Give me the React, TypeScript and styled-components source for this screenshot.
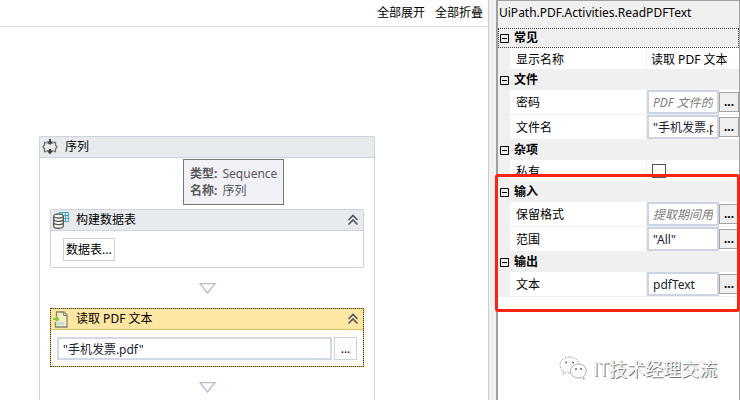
import React from "react";
import styled, { createGlobalStyle, css } from "styled-components";

const GlobalStyle = createGlobalStyle`
  * { box-sizing: border-box; }
  html, body { margin: 0; }
  body, button, input {
    font-family: "Noto Sans", "Noto Sans CJK SC", sans-serif;
    font-size: 12px;
    line-height: 16px;
    color: #000;
  }
`;

const Window = styled.div`
  display: flex;
  height: 100vh;
  overflow: hidden;
  background: #fff;
`;

const Designer = styled.main`
  flex: 1;
  min-width: 0;
  display: flex;
  flex-direction: column;
`;

const Toolbar = styled.nav`
  display: flex;
  justify-content: flex-end;
  gap: 10px;
  height: 27px;
  padding: 4px 5px 0 0;
  border-bottom: 1px solid #d9dcea;
  flex-shrink: 0;
`;

const ToolbarButton = styled.button`
  height: 18px;
  padding: 0;
  border: 0;
  background: none;
`;

const Canvas = styled.div`
  flex: 1;
  min-height: 0;
  display: flex;
  padding: 109px 113px 0 39px;
`;

const Sequence = styled.section`
  position: relative;
  flex: 1;
  min-width: 0;
  border: 1px solid #ccd3df;
  border-bottom: 0;
  border-radius: 2px 2px 0 0;
`;

const Header = styled.header<{ $selected?: boolean }>`
  display: flex;
  align-items: center;
  height: 21px;
  padding: 0 4px 0 2px;
  background: ${(p) => (p.$selected ? "#ffe6a2" : "#e7ebee")};
  border-bottom: 1px solid ${(p) => (p.$selected ? "#e0bd69" : "#ccd3df")};
`;

const HeaderTitle = styled.h2`
  flex: 1;
  margin: 0 0 0 7px;
  font-size: 12px;
  font-weight: 400;
`;

const CollapseButton = styled.button`
  display: flex;
  padding: 0;
  border: 0;
  background: none;
`;

const Steps = styled.div`
  display: flex;
  flex-direction: column;
  padding: 51px 10px 0;
`;

const Activity = styled.article<{ $selected?: boolean }>`
  border: 1px solid #ccd3df;
  border-radius: 2px;
  ${(p) =>
    p.$selected &&
    css`
      border: 1px dotted #4d3a0c;
      border-radius: 0;
      background: #d9b654;
    `}
`;

const ActivityBody = styled.div<{ $indent?: boolean }>`
  display: flex;
  gap: 2px;
  padding: 7px 6px 6px ${(p) => (p.$indent ? "12px" : "6px")};
  background: #fff;
`;

const BodyButton = styled.button`
  height: 23px;
  min-width: 23px;
  padding: 0 2px;
  border: 1px solid #ccd3df;
  background: #fff;
`;

const FileInput = styled.input`
  flex: 1;
  min-width: 0;
  height: 23px;
  padding: 0 4px;
  border: 2px solid #d2d8e4;
  background: #fff;
  color: #1b2233;
`;

const Connector = styled.div`
  display: flex;
  justify-content: center;
  height: 40px;
  padding-top: 15px;
`;

const Tooltip = styled.div`
  position: absolute;
  left: 143px;
  top: 22px;
  padding: 5px 6px;
  border: 1px solid #767676;
  background: #f1f2f7;
  color: #575757;
  line-height: 17px;
  white-space: nowrap;
`;

const TooltipLabel = styled.b`
  margin-right: 2px;
`;

const Splitter = styled.div`
  width: 8px;
  background: #f0f0f0;
  border-left: 1px solid #cdcdcd;
`;

const Panel = styled.aside`
  position: relative;
  width: 244px;
  flex-shrink: 0;
  display: flex;
  flex-direction: column;
  border: 1px solid #a0a0a0;
  border-left-width: 2px;
  border-bottom: 0;
`;

const PanelTitle = styled.h1`
  height: 27px;
  margin: 0;
  padding: 4px 1px;
  font-size: 12px;
  font-weight: 400;
  background: #f0f0f0;
  white-space: nowrap;
`;

const Group = styled.section`
  display: flex;
  flex-direction: column;
`;

const Category = styled.button<{ $focused?: boolean }>`
  display: flex;
  align-items: center;
  gap: 5px;
  height: 20px;
  padding: 0 1px;
  border: 1px ${(p) => (p.$focused ? "dotted #444" : "solid #f0f0f0")};
  background: #f0f0f0;
  font-weight: 700;
  text-align: left;
`;

const Property = styled.div<{ $plain?: boolean }>`
  display: grid;
  grid-template-columns: 137px 1fr;
  height: ${(p) => (p.$plain ? "22px" : "25px")};
  border-left: 12px solid #f0f0f0;
  border-bottom: 1px solid #f0f0f0;
`;

const PropertyLabel = styled.label`
  display: flex;
  align-items: center;
  padding: 2px 0 0 6px;
  border-right: 1px solid #f0f0f0;
`;

const PropertyValue = styled.div`
  display: flex;
  align-items: center;
  min-width: 0;
`;

const ValueInput = styled.input<{ $plain?: boolean }>`
  flex: 1;
  min-width: 0;
  height: 24px;
  padding: 0 4px;
  border: 2px solid #ccd3e2;
  background: #fff;
  color: #1b2233;
  &::placeholder { color: #7c7c7c; font-style: italic; opacity: 1; }
  ${(p) =>
    p.$plain &&
    css`
      height: 20px;
      border: 0;
      color: #000;
    `}
`;

const MoreButton = styled.button`
  width: 20px;
  height: 20px;
  padding: 0;
  border: 1px solid #a5a5a5;
  background: #efefef;
  font-weight: 700;
`;

const CheckBox = styled.input`
  appearance: none;
  width: 14px;
  height: 14px;
  margin: 0 0 0 5px;
  border: 1px solid #555;
  background: #fff;
`;

const Highlighted = styled.div`
  position: relative;
`;

const HighlightFrame = styled.div`
  position: absolute;
  inset: -8px -1px -15px -3px;
  border: 3px solid #ff2312;
  border-radius: 3px;
  pointer-events: none;
`;

const Watermark = styled.div`
  position: absolute;
  right: 22px;
  bottom: 18px;
  display: flex;
  align-items: center;
  gap: 6px;
  color: #fff;
  font-family: "Noto Sans CJK SC", sans-serif;
  font-size: 18px;
  line-height: 28px;
  white-space: nowrap;
  text-shadow: 1px 1px 0 #777, 0 0 1px #aaa;
`;

const SequenceIcon = () => (
  <svg width="16" height="16" viewBox="0 0 16 16" fill="none" stroke="#707070">
    <path d="M4.500 3.500H2.500v2.500L1 8l1.500 2v2.500h2M11.500 3.500h2v2.500L15 8l-1.500 2v2.500h-2" strokeWidth="1.300" />
    <path d="M4.500 4.500h7M4.500 11.500h7" stroke="#aaa" />
    <path d="M8 0v4M8 10v4" stroke="#444" strokeWidth="2" />
    <path d="M4.500 2.500L8 6l3.500-3.500zM4.500 11.500h7L8 15.500z" fill="#444" stroke="none" />
  </svg>
);

const TableIcon = () => (
  <svg width="16" height="17" viewBox="0 0 16 17">
    <path d="M6 .5h9.500v9H11" fill="#e4f3fb" stroke="#4b9fce" />
    <path d="M6 3.500h10M6 6.500h10M9.500 0v9M12.500 0v9" stroke="#4b9fce" />
    <path d="M.7 4v10c0 3 9.600 3 9.600 0V4" fill="#fff" stroke="#55564a" strokeWidth="1.300" />
    <ellipse cx="5.500" cy="4" rx="4.800" ry="2" fill="#fff" stroke="#55564a" strokeWidth="1.300" />
    <path d="M.7 7.300c0 2.800 9.600 2.800 9.600 0M.7 10.600c0 2.800 9.600 2.800 9.600 0" fill="none" stroke="#55564a" strokeWidth="1.300" />
  </svg>
);

const DocumentIcon = () => (
  <svg width="16" height="17" viewBox="0 0 16 17">
    <path d="M3.500 6V1h7.500l3 3v12H2.500v-5" fill="#f6edc5" stroke="#858575" strokeWidth="1.300" />
    <path d="M10.500 1v3.500H14" fill="none" stroke="#858575" />
    <path d="M0 8h6M3.500 5.500v5M5 6.500v3" stroke="#8bc84b" strokeWidth="2" />
    <path d="M4.500 12.500H11" stroke="#acd9e5" strokeWidth="2" />
  </svg>
);

const ChevronsUp = () => (
  <svg width="12" height="12" viewBox="0 0 12 12" fill="none" stroke="#505866" strokeWidth="1.600">
    <path d="M1.500 6L6 1.500 10.500 6M1.500 10.500L6 6l4.500 4.500" />
  </svg>
);

const ConnectorArrow = () => (
  <svg width="17" height="11" viewBox="0 0 17 11" fill="#fff" stroke="#b3bcca" strokeWidth="1.300">
    <path d="M1 .7h15L8.500 10z" />
  </svg>
);

const MinusBox = () => (
  <svg width="9" height="9" viewBox="0 0 9 9" fill="none" stroke="#000">
    <path d="M.5.5h8v8h-8zM2 4.500h5" />
  </svg>
);

const ChatIcon = () => (
  <svg width="28" height="25" viewBox="0 0 28 25" fill="#fff" stroke="#999" strokeWidth=".8">
    <path d="M10.500 1C5 1 1 4.500 1 9c0 2.700 1.400 4.800 3.700 6.200L4 18.500l3.500-2c1 .3 2 .5 3 .5 5.500 0 9.500-3.500 9.500-8s-4-8-9.500-8z" strokeDasharray="2 1" />
    <path d="M19.500 8c-4.500 0-8 3-8 7s3.500 7 8 7c1 0 2-.2 2.800-.5l3 1.700-.7-2.800c1.700-1.300 2.700-3.200 2.700-5.400 0-4-3.300-7-7.800-7z" />
    <g fill="#666" stroke="none">
      <circle cx="7" cy="6.500" r="1" /><circle cx="14" cy="6.500" r="1" />
      <circle cx="17" cy="13" r="1" /><circle cx="22" cy="13" r="1" />
    </g>
  </svg>
);

type RowProps = { id: string; label: string; value?: string; placeholder?: string; plain?: boolean };

const TextRow = ({ id, label, value, placeholder, plain }: RowProps) => (
  <Property $plain={plain}>
    <PropertyLabel htmlFor={id}>{label}</PropertyLabel>
    <PropertyValue>
      <ValueInput id={id} $plain={plain} defaultValue={value} placeholder={placeholder} />
      {!plain && <MoreButton aria-label={`${label} ...`}>...</MoreButton>}
    </PropertyValue>
  </Property>
);

const CategoryRow = ({ name, focused }: { name: string; focused?: boolean }) => (
  <Category $focused={focused} aria-expanded="true">
    <MinusBox />
    {name}
  </Category>
);

const Collapse = () => (
  <CollapseButton aria-label="折叠">
    <ChevronsUp />
  </CollapseButton>
);

export default function App() {
  return (
    <>
      <GlobalStyle />
      <Window>
        <Designer>
          <Toolbar>
            <ToolbarButton>全部展开</ToolbarButton>
            <ToolbarButton>全部折叠</ToolbarButton>
          </Toolbar>
          <Canvas>
            <Sequence>
              <Header>
                <SequenceIcon />
                <HeaderTitle>序列</HeaderTitle>
              </Header>
              <Steps>
                <Activity>
                  <Header>
                    <TableIcon />
                    <HeaderTitle>构建数据表</HeaderTitle>
                    <Collapse />
                  </Header>
                  <ActivityBody $indent>
                    <BodyButton>数据表...</BodyButton>
                  </ActivityBody>
                </Activity>
                <Connector><ConnectorArrow /></Connector>
                <Activity $selected>
                  <Header $selected>
                    <DocumentIcon />
                    <HeaderTitle>读取 PDF 文本</HeaderTitle>
                    <Collapse />
                  </Header>
                  <ActivityBody>
                    <FileInput aria-label="文件名" defaultValue={'"手机发票.pdf"'} />
                    <BodyButton>...</BodyButton>
                  </ActivityBody>
                </Activity>
                <Connector><ConnectorArrow /></Connector>
              </Steps>
              <Tooltip role="tooltip">
                <div><TooltipLabel>类型:</TooltipLabel> Sequence</div>
                <div><TooltipLabel>名称:</TooltipLabel> 序列</div>
              </Tooltip>
            </Sequence>
          </Canvas>
        </Designer>
        <Splitter />
        <Panel>
          <PanelTitle>UiPath.PDF.Activities.ReadPDFText</PanelTitle>
          <Group>
            <CategoryRow name="常见" focused />
            <TextRow id="display-name" label="显示名称" value="读取 PDF 文本" plain />
          </Group>
          <Group>
            <CategoryRow name="文件" />
            <TextRow id="password" label="密码" placeholder="PDF 文件的密码" />
            <TextRow id="file-name" label="文件名" value={'"手机发票.pdf"'} />
          </Group>
          <Group>
            <CategoryRow name="杂项" />
            <Property $plain>
              <PropertyLabel htmlFor="private">私有</PropertyLabel>
              <PropertyValue><CheckBox id="private" type="checkbox" /></PropertyValue>
            </Property>
          </Group>
          <Highlighted>
            <Group>
              <CategoryRow name="输入" />
              <TextRow id="keep-format" label="保留格式" placeholder="提取期间用于保留格式" />
              <TextRow id="range" label="范围" value={'"All"'} />
            </Group>
            <Group>
              <CategoryRow name="输出" />
              <TextRow id="text" label="文本" value="pdfText" />
            </Group>
            <HighlightFrame />
          </Highlighted>
          <Watermark>
            <ChatIcon />
            IT技术经理交流
          </Watermark>
        </Panel>
      </Window>
    </>
  );
}
